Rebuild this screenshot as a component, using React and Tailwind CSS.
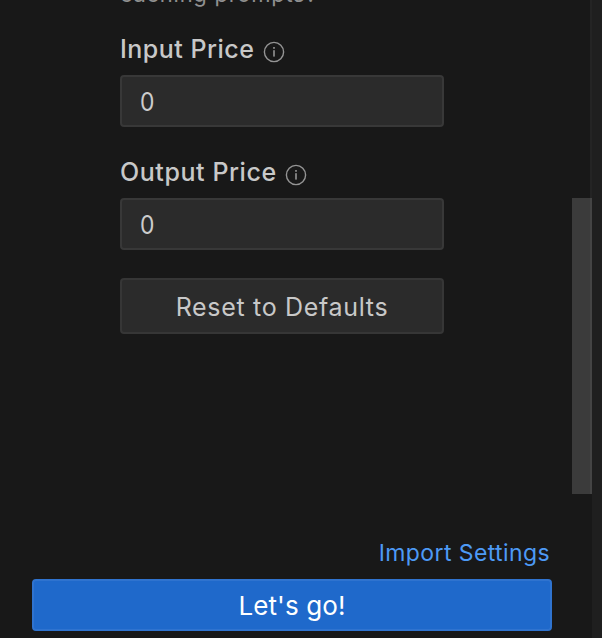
function InfoIcon() {
  return (
    <svg className="block h-[22px] w-[22px] shrink-0" viewBox="0 0 22 22" fill="none">
      <circle cx="11" cy="11" r="9.6" stroke="#949494" strokeWidth="1.4" />
      <rect x="10.2" y="6" width="1.6" height="1.8" fill="#949494" />
      <rect x="10.2" y="9.2" width="1.6" height="6.4" fill="#949494" />
    </svg>
  );
}

function PriceField({ label, labelClass }) {
  return (
    <div className="flex flex-col">
      <div className="flex h-[50px] items-start">
        <label className={`mt-[7px] text-[25px] leading-[34px] font-medium whitespace-nowrap text-[#c8c8c8] ${labelClass}`}>
          {label}
        </label>
        <div className="mt-[16px]">
          <InfoIcon />
        </div>
      </div>
      <div className="flex h-[52px] items-center rounded-[4px] border-2 border-[#383838] bg-[#2b2b2b] pt-[2px] pl-[18px] text-[26px] leading-8 text-[#cccccc]">
        <span className="inline-block origin-left scale-x-[0.88]">0</span>
      </div>
    </div>
  );
}

export default function App() {
  return (
    <div className="flex h-[638px] w-[602px] overflow-hidden bg-[#181818] font-['Inter',sans-serif]">
      <main className="flex w-[572px] flex-col">
        <div className="ml-[120px] flex h-[494px] w-[324px] flex-col overflow-hidden">
          <p className="-mt-[22px] h-[47px] shrink-0 text-[22px] leading-[32px] tracking-[0.72px] whitespace-nowrap text-[#909090]">
            caching prompts?
          </p>
          <div className="flex flex-col gap-[21px]">
            <PriceField label="Input Price" labelClass="w-[143px] tracking-[0.5px]" />
            <PriceField label="Output Price" labelClass="w-[165px] tracking-[0.58px]" />
          </div>
          <button className="mt-[28px] flex h-14 shrink-0 items-center justify-center rounded-[4px] border-2 border-[#363636] bg-[#2b2b2b] pt-[2px] text-[25px] leading-8 tracking-[0.68px] text-[#c8c8c8]">
            Reset to Defaults
          </button>
        </div>
        <footer className="flex h-[144px] flex-col pl-8">
          <a className="mt-[43px] h-[42px] w-[520px] pr-[2px] text-right text-[23px] leading-8 tracking-[0.4px] text-[#4d9af5]">
            Import Settings
          </a>
          <button className="flex h-[52px] w-[520px] items-center justify-center rounded-[4px] border-2 border-[#2f73cf] bg-[#1f69cb] pt-[2px] text-[26px] leading-8 tracking-[0.1px] text-white">
            Let&apos;s go!
          </button>
        </footer>
      </main>
      <div className="flex w-5 flex-col">
        <div className="ml-[18px] h-[198px] w-[2px] bg-[#242424]" />
        <div className="h-[296px] border-r-2 border-[#444444] bg-[#3b3b3b]" />
      </div>
      <div className="w-[10px] bg-[#1f1f1f]" />
    </div>
  );
}
